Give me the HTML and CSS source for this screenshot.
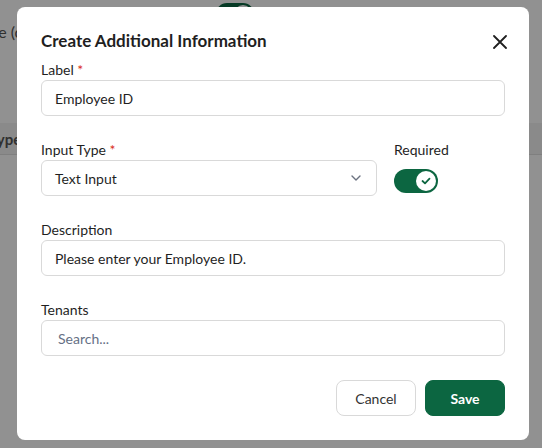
FILE: index.html
```html
<!DOCTYPE html>
<html>
<head>
  <meta charset="UTF-8">
  <title>Create Additional Information</title>
  <link rel="stylesheet" href="styles.css">
</head>
<body>
  <!-- Seite im Hintergrund -->
  <div class="page">
    <div class="page-top">
      <div class="page-left"><span class="page-text">Type (optional)</span></div>
      <span class="page-toggle"><span class="page-knob"></span></span>
    </div>
    <div class="page-table-head">
      <div class="page-left"><span>Type</span></div>
    </div>
  </div>

  <div class="overlay">
    <div class="modal">
      <button type="button" class="close" title="Close">
        <svg width="14" height="14" viewBox="0 0 14 14"><path d="M1 1L13 13M13 1L1 13" stroke="#1f1f1f" stroke-width="1.8" stroke-linecap="round"/></svg>
      </button>
      <h2>Create Additional Information</h2>

      <div class="field">
        <label>Label <span class="req">*</span></label>
        <input type="text" value="Employee ID">
      </div>

      <div class="field row">
        <div class="col-main">
          <label>Input Type <span class="req">*</span></label>
          <div class="select">
            <span>Text Input</span>
            <svg width="10" height="6" viewBox="0 0 10 6"><path d="M1 1L5 5L9 1" fill="none" stroke="#6b7280" stroke-width="1.4" stroke-linecap="round" stroke-linejoin="round"/></svg>
          </div>
        </div>
        <div class="col-side">
          <label>Required</label>
          <span class="switch">
            <span class="knob">
              <svg width="10" height="8" viewBox="0 0 10 8"><path d="M1.5 4L4 6.3L8.5 1.7" fill="none" stroke="#0c6641" stroke-width="1.8" stroke-linecap="round" stroke-linejoin="round"/></svg>
            </span>
          </span>
        </div>
      </div>

      <div class="field">
        <label>Description</label>
        <input type="text" value="Please enter your Employee ID.">
      </div>

      <div class="field">
        <label>Tenants</label>
        <input type="text" class="search" placeholder="Search...">
      </div>

      <div class="button-group">
        <button type="button" class="cancel">Cancel</button>
        <button type="button" class="save">Save</button>
      </div>
    </div>
  </div>
</body>
</html>
```

FILE: styles.css
```css
body { margin: 0; font-family: Lato, "Noto Sans", sans-serif; color: #1f1f1f; }
.page { height: 448px; background: #fff; overflow: hidden; }
.page-top { display: flex; align-items: flex-start; height: 123px; }
.page-left { width: 216px; flex: 0 0 216px; display: flex; white-space: nowrap; }
.page-text { margin: 22px 0 0 -27px; font-size: 16px; color: #555; }
.page-toggle { display: flex; justify-content: flex-end; align-items: center; width: 38px; height: 22px; margin-top: 3px; padding: 2px; box-sizing: border-box; border-radius: 11px; background: #0c6641; }
.page-knob { width: 18px; height: 18px; border-radius: 50%; background: #fff; }
.page-table-head { display: flex; align-items: center; height: 31px; background: #f2f2f2; border-bottom: 1px solid #e0e0e0; }
.page-table-head span { margin-left: -11px; font-weight: bold; font-size: 15px; color: #555; }

.overlay { position: fixed; inset: 0; background: rgba(0, 0, 0, 0.43); }
.modal { position: absolute; left: 17px; top: 7px; width: 464px; padding: 23px 24px 24px; background: #fff; border-radius: 8px; }
.close { position: absolute; top: 28px; right: 22px; padding: 0; border: none; background: none; cursor: pointer; line-height: 0; }
h2 { margin: 0 0 8px; font-size: 17px; line-height: 22px; font-weight: bold; color: #1f1f1f; }

.field { margin-bottom: 24px; }
label { display: block; font-size: 14px; line-height: 20px; color: #1f1f1f; }
.req { color: #d92d20; }
input[type="text"] { display: block; width: 100%; box-sizing: border-box; height: 36px; padding: 0 13px; border: 1px solid #d9d9d9; border-radius: 6px; font-family: inherit; font-size: 14px; color: #1f1f1f; outline: none; }
input.search { padding-left: 16px; }
input::placeholder { color: #667085; }

.row { display: flex; gap: 17px; }
.col-main { flex: 0 0 336px; }
.col-side { flex: 1; }
.select { display: flex; align-items: center; justify-content: space-between; height: 36px; box-sizing: border-box; padding: 0 15px 0 13px; border: 1px solid #d9d9d9; border-radius: 6px; font-size: 14px; }
.switch { display: flex; justify-content: flex-end; align-items: center; width: 44px; height: 24px; margin-top: 9px; padding: 2px; box-sizing: border-box; border-radius: 12px; background: #0c6641; }
.knob { display: flex; align-items: center; justify-content: center; width: 20px; height: 20px; border-radius: 50%; background: #fff; }

.button-group { display: flex; justify-content: flex-end; gap: 9px; }
button.cancel, button.save { width: 80px; height: 36px; border-radius: 8px; font-family: inherit; font-size: 14px; cursor: pointer; }
.cancel { background: #fff; border: 1px solid #d9d9d9; color: #333; }
.save { background: #0c6641; border: 1px solid #0c6641; color: #fff; font-weight: bold; }
```
